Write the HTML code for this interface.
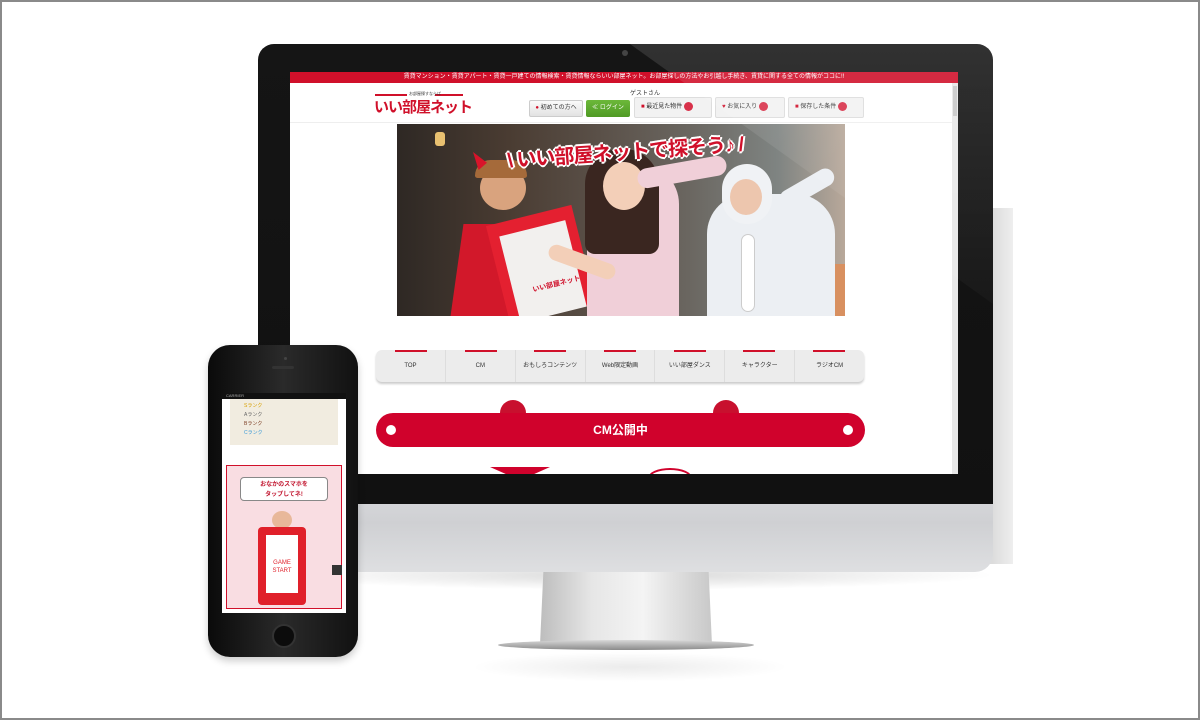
<!DOCTYPE html>
<html><head><meta charset="utf-8"><style>
*{margin:0;padding:0;box-sizing:border-box}
body{width:1200px;height:720px;background:#fff;position:relative;overflow:hidden;font-family:"Liberation Sans","Noto Sans CJK JP",sans-serif}
.frame{position:absolute;left:0;top:0;width:1200px;height:720px;border:2px solid #8a8a8a;z-index:50}
.abs{position:absolute}
</style></head><body>
<div class="frame"></div>
<div class="abs" style="left:985px;top:208px;width:28px;height:356px;background:linear-gradient(90deg,#d6d6d6,#eee)"></div>
<div class="abs" style="left:268px;top:560px;width:730px;height:30px;background:radial-gradient(ellipse at center,rgba(0,0,0,.15),rgba(0,0,0,0) 70%)"></div>
<div class="abs" style="left:540px;top:570px;width:172px;height:75px;background:linear-gradient(90deg,#bdbdbd,#e6e6e6 30%,#f4f4f4 60%,#c8c8c8);clip-path:polygon(2% 0,98% 0,100% 100%,0 100%)"></div>
<div class="abs" style="left:498px;top:640px;width:256px;height:10px;border-radius:50%;background:linear-gradient(#d8d8d8,#8a8a8a)"></div>
<div class="abs" style="left:470px;top:652px;width:320px;height:30px;background:radial-gradient(ellipse at center,rgba(0,0,0,.08),rgba(0,0,0,0) 70%)"></div>
<div class="abs" style="left:258px;top:490px;width:735px;height:82px;border-radius:0 0 18px 18px;background:linear-gradient(#d8d9dc,#cfd0d3 40%,#dedfe1)"></div>
<div class="abs" style="left:258px;top:44px;width:735px;height:460px;border-radius:16px 16px 0 0;background:linear-gradient(#151515,#111)"></div>
<div class="abs" style="left:622px;top:50px;width:6px;height:6px;border-radius:50%;background:#444"></div>
<div class="abs" style="left:290px;top:72px;width:668px;height:402px;background:#fff;overflow:hidden">
  <div class="abs" style="left:0;top:0;width:668px;height:11px;background:#d0102a;color:#fff;font-size:6px;line-height:11px;text-align:center;white-space:nowrap">賃貸マンション・賃貸アパート・賃貸一戸建ての情報検索・賃貸情報ならいい部屋ネット。お部屋探しの方法やお引越し手続き、賃貸に関する全ての情報がココに!!</div>
  <div class="abs" style="left:662px;top:11px;width:6px;height:391px;background:#e8e8e8"></div>
  <div class="abs" style="left:663px;top:14px;width:4px;height:30px;background:#c8c8c8"></div>
  <div class="abs" style="left:85px;top:22px;width:32px;height:2px;background:#d0102a"></div>
  <div class="abs" style="left:145px;top:22px;width:28px;height:2px;background:#d0102a"></div>
  <div class="abs" style="left:119px;top:19px;font-size:4px;color:#333">お部屋探すならば</div>
  <div class="abs" style="left:84px;top:24px;font-size:15px;font-weight:bold;color:#d0102a;letter-spacing:-1px">いい部屋ネット</div>
  <div class="abs" style="left:340px;top:16px;font-size:6px;color:#333">ゲストさん</div>
  <div class="abs" style="left:239px;top:28px;width:54px;height:17px;background:linear-gradient(#fafafa,#e2e2e2);border:1px solid #ccc;border-radius:2px;font-size:6px;line-height:15px;text-align:center;color:#333"><span style="color:#d0102a">●</span> 初めての方へ</div>
  <div class="abs" style="left:296px;top:28px;width:44px;height:17px;background:linear-gradient(#6cb83a,#4f9a24);border-radius:2px;font-size:6px;line-height:17px;text-align:center;color:#fff">≪ ログイン</div>
  <div class="abs" style="left:344px;top:25px;width:78px;height:21px;background:#f2f2f2;border:1px solid #ddd;border-radius:2px;font-size:6px;line-height:19px;padding-left:6px;color:#333"><span style="color:#d0102a">■</span> 最近見た物件 <span style="display:inline-block;width:9px;height:9px;border-radius:50%;background:#d8314a;vertical-align:middle"></span></div>
  <div class="abs" style="left:425px;top:25px;width:70px;height:21px;background:#f2f2f2;border:1px solid #ddd;border-radius:2px;font-size:6px;line-height:19px;padding-left:6px;color:#333"><span style="color:#d0102a">♥</span> お気に入り <span style="display:inline-block;width:9px;height:9px;border-radius:50%;background:#d8314a;vertical-align:middle"></span></div>
  <div class="abs" style="left:498px;top:25px;width:76px;height:21px;background:#f2f2f2;border:1px solid #ddd;border-radius:2px;font-size:6px;line-height:19px;padding-left:6px;color:#333"><span style="color:#d0102a">■</span> 保存した条件 <span style="display:inline-block;width:9px;height:9px;border-radius:50%;background:#d8314a;vertical-align:middle"></span></div>
  <div class="abs" style="left:0;top:50px;width:662px;height:1px;background:#eee"></div>
  <div class="abs" style="left:107px;top:52px;width:448px;height:192px;background:linear-gradient(90deg,#2e2824 0%,#4a3c32 25%,#5a5048 45%,#6a6660 65%,#7f8482 85%,#b8a89a 100%);overflow:hidden">
    <div class="abs" style="left:38px;top:8px;width:10px;height:14px;background:#e8c070;border-radius:3px"></div>
    <div class="abs" style="left:360px;top:140px;width:88px;height:52px;background:#d89060"></div>
    <div class="abs" style="left:83px;top:42px;width:46px;height:44px;border-radius:50%;background:#d9a37e"></div>
    <div class="abs" style="left:78px;top:36px;width:52px;height:18px;border-radius:26px 26px 4px 4px;background:#a56a3a"></div>
    <div class="abs" style="left:76px;top:28px;width:14px;height:18px;background:#d8142a;clip-path:polygon(0 0,100% 60%,40% 100%)"></div>
    <div class="abs" style="left:100px;top:110px;width:80px;height:38px;background:#c8142a;transform:rotate(-30deg)"></div>
    <div class="abs" style="left:60px;top:100px;width:85px;height:92px;background:#d2182a;transform:skewX(-8deg)"></div>
    <div class="abs" style="left:100px;top:90px;width:88px;height:102px;background:#e42030;transform:rotate(-14deg)"></div>
    <div class="abs" style="left:112px;top:103px;width:68px;height:89px;background:#f2f0ee;transform:rotate(-14deg)"></div>
    <div class="abs" style="left:135px;top:155px;font-size:7px;font-weight:bold;color:#d0102a;transform:rotate(-14deg)">いい部屋ネット</div>
    <div class="abs" style="left:190px;top:40px;width:92px;height:152px;border-radius:40px 40px 0 0;background:#f0cfd8"></div>
    <div class="abs" style="left:188px;top:25px;width:74px;height:105px;border-radius:35px 35px 10px 10px;background:#3a2620"></div>
    <div class="abs" style="left:206px;top:38px;width:42px;height:48px;border-radius:50%;background:#f3cfb8"></div>
    <div class="abs" style="left:240px;top:38px;width:90px;height:20px;background:#f0cfd8;transform:rotate(-10deg);border-radius:10px"></div>
    <div class="abs" style="left:150px;top:130px;width:70px;height:16px;background:#f3cfb8;transform:rotate(20deg);border-radius:8px"></div>
    <div class="abs" style="left:310px;top:70px;width:128px;height:122px;border-radius:40px 40px 0 0;background:#eceff3"></div>
    <div class="abs" style="left:325px;top:40px;width:50px;height:60px;border-radius:25px;background:#f0f2f5"></div>
    <div class="abs" style="left:333px;top:55px;width:32px;height:36px;border-radius:50%;background:#edc6ae"></div>
    <div class="abs" style="left:380px;top:55px;width:60px;height:18px;background:#eceff3;transform:rotate(-30deg);border-radius:9px"></div>
    <div class="abs" style="left:344px;top:110px;width:14px;height:78px;border-radius:7px;background:#fff;border:1px solid #ccc"></div>
    <div class="abs" style="left:110px;top:12px;font-size:20px;font-weight:bold;color:#d0102a;letter-spacing:-1px;text-shadow:2px 0 0 #fff,-2px 0 0 #fff,0 2px 0 #fff,0 -2px 0 #fff,1px 1px 0 #fff,-1px -1px 0 #fff;transform:rotate(-4deg)">\ いい部屋ネットで探そう♪ /</div>
  </div>
  <div class="abs" style="left:86px;top:278px;width:488px;height:32px;background:#ececec;border-radius:6px;box-shadow:0 2px 2px #ccc;display:flex;font-size:6px;color:#333">
    <div style="flex:1;text-align:center;line-height:32px;border-right:1px solid #ddd">TOP</div>
    <div style="flex:1;text-align:center;line-height:32px;border-right:1px solid #ddd">CM</div>
    <div style="flex:1;text-align:center;line-height:32px;border-right:1px solid #ddd">おもしろコンテンツ</div>
    <div style="flex:1;text-align:center;line-height:32px;border-right:1px solid #ddd">Web限定動画</div>
    <div style="flex:1;text-align:center;line-height:32px;border-right:1px solid #ddd">いい部屋ダンス</div>
    <div style="flex:1;text-align:center;line-height:32px;border-right:1px solid #ddd">キャラクター</div>
    <div style="flex:1;text-align:center;line-height:32px">ラジオCM</div>
  </div>
  <div class="abs" style="left:86px;top:278px;width:488px;height:2px;display:flex;justify-content:space-around"><i style="width:32px;background:#d0102a"></i><i style="width:32px;background:#d0102a"></i><i style="width:32px;background:#d0102a"></i><i style="width:32px;background:#d0102a"></i><i style="width:32px;background:#d0102a"></i><i style="width:32px;background:#d0102a"></i><i style="width:32px;background:#d0102a"></i></div>
  <div class="abs" style="left:210px;top:328px;width:26px;height:14px;border-radius:13px 13px 0 0;background:#c8102e"></div>
  <div class="abs" style="left:423px;top:328px;width:26px;height:14px;border-radius:13px 13px 0 0;background:#c8102e"></div>
  <div class="abs" style="left:86px;top:341px;width:489px;height:34px;border-radius:17px;background:#d0022c;color:#fff;font-size:12px;font-weight:bold;text-align:center;line-height:34px">CM公開中</div>
  <div class="abs" style="left:96px;top:353px;width:10px;height:10px;border-radius:50%;background:#fff"></div>
  <div class="abs" style="left:553px;top:353px;width:10px;height:10px;border-radius:50%;background:#fff"></div>
  <div class="abs" style="left:200px;top:395px;width:60px;height:8px;background:#d0022c;clip-path:polygon(0 0,30% 100%,70% 100%,100% 0)"></div>
  <div class="abs" style="left:358px;top:396px;width:44px;height:20px;border:2px solid #d0022c;border-radius:50%"></div>
</div>
<div class="abs" style="left:258px;top:44px;width:735px;height:460px;border-radius:16px 16px 0 0;background:linear-gradient(rgba(255,255,255,.12),rgba(255,255,255,0) 70%);clip-path:polygon(372px 0,735px 0,735px 260px)"></div>
<div class="abs" style="left:208px;top:345px;width:150px;height:312px;border-radius:22px;background:linear-gradient(90deg,#0a0a0a,#2a2a2a 50%,#111);box-shadow:0 4px 8px rgba(0,0,0,.2)"></div>
<div class="abs" style="left:272px;top:366px;width:22px;height:3px;border-radius:2px;background:#333"></div>
<div class="abs" style="left:284px;top:357px;width:3px;height:3px;border-radius:50%;background:#444"></div>
<div class="abs" style="left:272px;top:624px;width:24px;height:24px;border-radius:50%;border:2px solid #333;background:#0c0c0c"></div>
<div class="abs" style="left:222px;top:393px;width:124px;height:220px;background:#fff;overflow:hidden">
  <div class="abs" style="left:0;top:0;width:124px;height:6px;background:#111;color:#aaa;font-size:4px;line-height:6px;padding-left:4px">CARRIER</div>
  <div class="abs" style="left:8px;top:6px;width:108px;height:46px;background:#f1ece0;font-size:5px;line-height:9px;padding:3px 0 0 14px;color:#666">
    <div><span style="color:#d8a000">Sランク</span></div><div>Aランク</div><div style="color:#7a3a20">Bランク</div><div style="color:#3a9ad8">Cランク</div>
  </div>
  <div class="abs" style="left:4px;top:72px;width:116px;height:144px;border:1px solid #d0102a;background:#f9dde2"></div>
  <div class="abs" style="left:18px;top:84px;width:88px;height:24px;border:1px solid #888;border-radius:4px;background:#fff;font-size:6px;font-weight:bold;color:#c0102a;text-align:center;line-height:10px;padding-top:2px">おなかのスマホを<br>タップしてネ!</div>
  <div class="abs" style="left:50px;top:118px;width:20px;height:18px;border-radius:50%;background:#e8b89a"></div>
  <div class="abs" style="left:36px;top:134px;width:48px;height:78px;background:#e0202a;border-radius:4px"></div>
  <div class="abs" style="left:44px;top:142px;width:32px;height:58px;background:#fff;font-size:6px;color:#e0202a;text-align:center;padding-top:24px;line-height:8px">GAME<br>START</div>
  <div class="abs" style="left:110px;top:172px;width:10px;height:10px;background:#333"></div>
</div>
</body></html>
